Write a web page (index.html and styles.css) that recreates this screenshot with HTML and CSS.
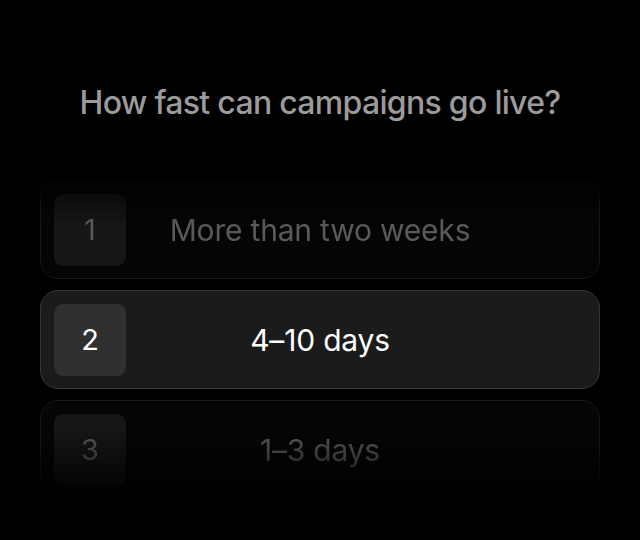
FILE: index.html
```html
<!DOCTYPE html>
<html lang="en">
<head>
<meta charset="utf-8">
<title>How fast can campaigns go live?</title>
<link rel="stylesheet" href="styles.css">
</head>
<body>
<main class="page">
  <h1 class="title">How fast can campaigns go live?</h1>
  <ul class="options">
    <li class="option option--dim option--top">
      <span class="num">1</span>
      <span class="label">More than two weeks</span>
    </li>
    <li class="option option--active">
      <span class="num">2</span>
      <span class="label">4–10 days</span>
    </li>
    <li class="option option--dim option--bottom">
      <span class="num">3</span>
      <span class="label">1–3 days</span>
    </li>
  </ul>
</main>
</body>
</html>
```

FILE: styles.css
```css
html, body {
  margin: 0;
  padding: 0;
  background: #000;
}
body {
  width: 640px;
  height: 540px;
  overflow: hidden;
  font-family: Inter, "Liberation Sans", sans-serif;
}
.page {
  display: flex;
  flex-direction: column;
  align-items: center;
  padding-top: 82px;
}
.title {
  margin: 0;
  font-size: 32px;
  font-weight: 500;
  letter-spacing: -0.7px;
  line-height: 42px;
  color: #9b9b9b;
}
.options {
  list-style: none;
  margin: 56px 0 0;
  padding: 0;
  width: 560px;
  display: flex;
  flex-direction: column;
  gap: 11px;
}
.option {
  position: relative;
  box-sizing: border-box;
  height: 99px;
  padding: 13px;
  border-radius: 18px;
  border: 1.5px solid #1a1a1a;
  background: #050505;
  display: flex;
  align-items: center;
}
.num {
  flex: none;
  width: 72px;
  height: 72px;
  border-radius: 9px;
  background: #161616;
  display: flex;
  align-items: center;
  justify-content: center;
  font-size: 29px;
  font-weight: 400;
  color: #5a5a5a;
}
.label {
  position: absolute;
  left: 0;
  right: 0;
  text-align: center;
  font-size: 30px;
  font-weight: 400;
  color: #5a5a5a;
  letter-spacing: -0.2px;
}
.option--active {
  background: #1b1b1b;
  border-color: #363636;
}
.option--active .num {
  background: #303030;
  color: #fff;
}
.option--active .label {
  color: #fff;
}
.option--top {
  -webkit-mask-image: linear-gradient(to bottom, rgba(0,0,0,0.25) 0%, #000 45%);
  mask-image: linear-gradient(to bottom, rgba(0,0,0,0.25) 0%, #000 45%);
}
.option--bottom {
  -webkit-mask-image: linear-gradient(to bottom, #000 30%, rgba(0,0,0,0) 100%);
  mask-image: linear-gradient(to bottom, #000 30%, rgba(0,0,0,0) 100%);
}
```
